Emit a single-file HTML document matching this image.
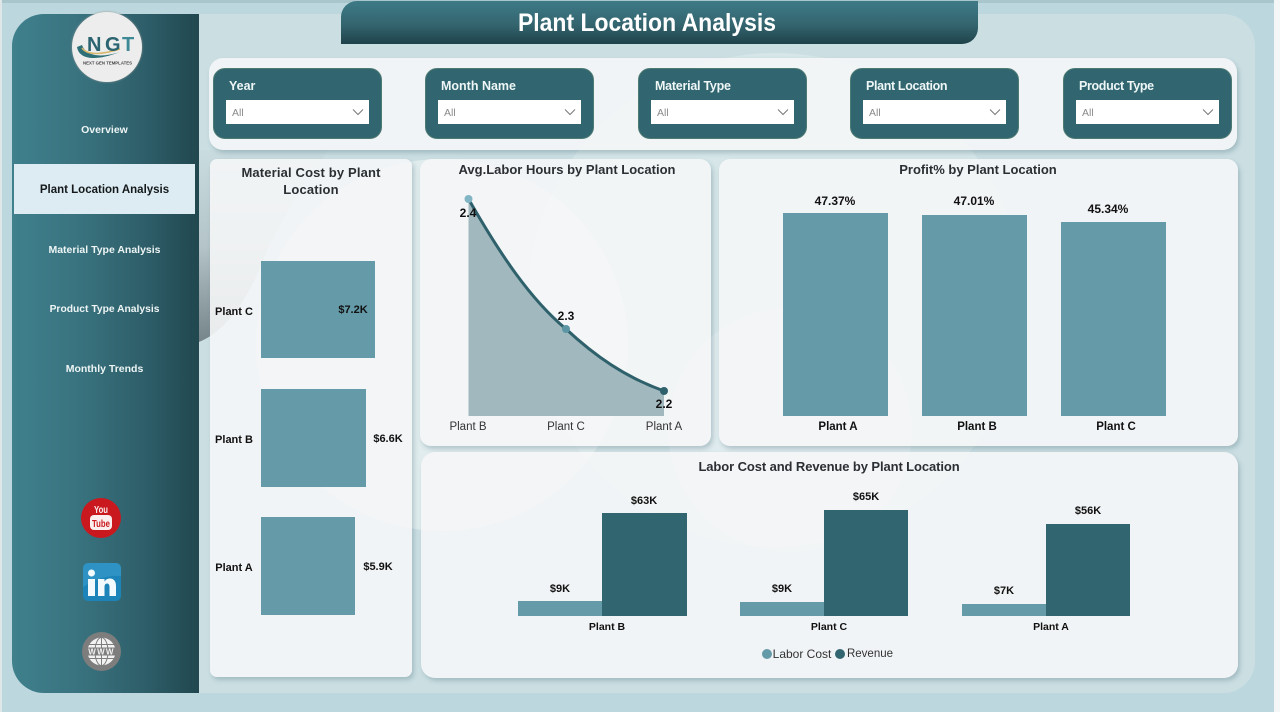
<!DOCTYPE html>
<html><head><meta charset="utf-8">
<style>
*{box-sizing:border-box;margin:0;padding:0}
html,body{width:1280px;height:712px;overflow:hidden;background:#bcd8de;font-family:"Liberation Sans",sans-serif}
.a{position:absolute}
#root{position:relative;width:1280px;height:712px;overflow:hidden;background:#bcd8de}
.t{position:absolute;white-space:nowrap;transform:translateX(-50%);font-weight:bold;color:#111}
.title{color:#2b2f33;font-size:13px}
.panel{position:absolute;background:rgba(245,246,247,.9);box-shadow:2px 3px 5px rgba(70,110,120,.3)}
.sl{position:absolute;top:68px;height:71px;width:169px;background:#316570;border-radius:12px;border:1px solid #4d7a72}
.sl b{position:absolute;left:15px;top:10px;color:#eef6f6;font-size:12.5px}
.sl div{position:absolute;left:12px;top:31px;width:143px;height:24px;background:#fff;color:#8a8a8a;font-size:10.5px;padding:7px 0 0 6px}
.sl svg{position:absolute;right:5px;top:8px}
.nav{position:absolute;left:12px;width:185px;text-align:center;color:#eef5f5;font-weight:bold;font-size:10.5px}
.b1{position:absolute;background:#659aa8}
.b2{position:absolute;background:#316570}
.l{font-size:11px}
.n{font-weight:normal;color:#333;font-size:11.5px}
</style></head><body><div id="root">
<div class="a" style="left:0;top:0;width:1280px;height:3px;background:#a9c6cc"></div>
<div class="a" style="left:0;top:0;width:2px;height:712px;background:#dfe6e8"></div>
<div class="a" style="left:1274px;top:0;width:6px;height:712px;background:#f4f6f7"></div>

<div class="a" style="left:12px;top:14px;width:1243px;height:679px;border-radius:32px;background:#cbdfe3"></div>
<svg class="a" style="left:0;top:0" width="1280" height="712" viewBox="0 0 1280 712">
<defs><linearGradient id="w" x1="0" y1="150" x2="0" y2="342" gradientUnits="userSpaceOnUse"><stop offset="0" stop-color="#c9dce0"/><stop offset=".5" stop-color="#b4c4c8"/><stop offset="1" stop-color="#76858a"/></linearGradient></defs>
<circle cx="775" cy="300" r="247" fill="#fff" fill-opacity=".22"/>
<circle cx="790" cy="430" r="122" fill="#fff" fill-opacity=".22"/>
<path d="M199 150 L328 150 Q292 200 268 248 Q240 325 199 342 Z" fill="url(#w)"/>
<circle cx="442" cy="345" r="186" fill="#fff" fill-opacity=".4"/>
</svg>

<!-- sidebar -->
<div class="a" style="left:12px;top:14px;width:187px;height:679px;border-radius:32px 0 0 32px;background:linear-gradient(90deg,#3f808d 0%,#39737f 35%,#2e5f6a 70%,#21474f 100%)"></div>

<!-- header -->
<div class="a" style="left:341px;top:1px;width:637px;height:43px;border-radius:16px 0 16px 0;background:linear-gradient(180deg,#3d7a86 0%,#34656f 55%,#1f4249 100%)"></div>
<div class="t" style="left:647px;top:9px;font-size:25px;color:#fff;transform:translateX(-50%) scaleX(.918)">Plant Location Analysis</div>

<!-- logo -->
<div class="a" style="left:72px;top:12px;width:70px;height:70px;border-radius:50%;background:#ecedec;box-shadow:0 0 2px #999"></div>
<svg class="a" style="left:72px;top:12px" width="70" height="70" viewBox="0 0 70 70">
<path d="M5 35 C7 47 22 50 48 40 C32 45 15 46 10 33 Z" fill="#2f6f78"/>
<path d="M10 36 C16 44 32 42 48 37" stroke="#d8b66a" stroke-width="1.5" fill="none"/>
<text x="15" y="39" font-family="Liberation Sans" font-weight="bold" font-size="20" fill="#2b6470">N</text>
<text x="33" y="39" font-family="Liberation Sans" font-weight="bold" font-size="20" fill="#2b6470">G</text>
<text x="50" y="39" font-family="Liberation Sans" font-weight="bold" font-size="20" fill="#3d8a96">T</text>
<text x="11" y="52.500" font-family="Liberation Sans" font-weight="bold" font-size="4.600" fill="#444" textLength="49" lengthAdjust="spacingAndGlyphs">NEXT GEN TEMPLATES</text>
</svg>

<!-- nav -->
<div class="nav" style="top:124px">Overview</div>
<div class="a" style="left:14px;top:164px;width:181px;height:50px;background:#dcecf2"></div>
<div class="nav" style="top:184px;left:14px;width:181px;color:#14181a;font-size:11.500px">Plant Location Analysis</div>
<div class="nav" style="top:244px">Material Type Analysis</div>
<div class="nav" style="top:304px;font-size:10.300px">Product Type Analysis</div>
<div class="nav" style="top:363px">Monthly Trends</div>

<!-- social -->
<svg class="a" style="left:81px;top:498px" width="40" height="40" viewBox="0 0 40 40">
<circle cx="20" cy="20" r="20" fill="#c9191f"/>
<text x="20" y="15" text-anchor="middle" font-family="Liberation Sans" font-weight="bold" font-size="10.500" fill="#fbeeee" textLength="14" lengthAdjust="spacingAndGlyphs">You</text>
<rect x="9" y="17" width="22" height="15" rx="4" fill="#fbeeee"/>
<text x="20" y="29" text-anchor="middle" font-family="Liberation Sans" font-weight="bold" font-size="10.500" fill="#c9191f" textLength="18" lengthAdjust="spacingAndGlyphs">Tube</text>
</svg>
<svg class="a" style="left:83px;top:563px" width="38" height="38" viewBox="0 0 38 38">
<rect width="38" height="38" rx="5" fill="#1c84b8"/>
<path d="M0 5a5 5 0 0 1 5-5h28a5 5 0 0 1 5 5v8C24 12 12 16 0 24Z" fill="#3a9ccb" opacity=".6"/>
<circle cx="8.500" cy="10" r="3.500" fill="#f2fafd"/>
<rect x="5" y="16" width="7" height="17" fill="#f2fafd"/>
<path d="M15 16h6.500v2.600c1.200-2 3-3.100 5.300-3.100 4.300 0 6.200 3 6.200 7.700V33h-6.500v-8.800c0-2.300-.7-3.700-2.400-3.700-1.800 0-2.600 1.400-2.600 3.700V33H15Z" fill="#f2fafd"/>
</svg>
<svg class="a" style="left:82px;top:632px" width="39" height="39" viewBox="0 0 39 39">
<circle cx="19.500" cy="19.500" r="19.500" fill="#7d7d7d"/>
<circle cx="19.500" cy="19.500" r="14" fill="#f2f2f2"/>
<g stroke="#7d7d7d" stroke-width="1" fill="none">
<ellipse cx="19.500" cy="19.500" rx="6.500" ry="14"/>
<path d="M19.500 5.500V33.500M6 12.500H33M6 26.500H33"/>
</g>
<rect x="4" y="15.500" width="31" height="8" fill="#7d7d7d"/>
<text x="19.500" y="22.500" text-anchor="middle" font-family="Liberation Sans" font-weight="bold" font-size="8" fill="#f2f2f2" letter-spacing="1.300">WWW</text>
</svg>

<!-- filter panel -->
<div class="panel" style="left:209px;top:58px;width:1028px;height:92px;border-radius:14px"></div>
<div class="sl" style="left:213px"><b>Year</b><div>All<svg width="12" height="8"><path d="M1 1.500l5 5 5-5" stroke="#777" fill="none"/></svg></div></div>
<div class="sl" style="left:425px"><b>Month Name</b><div>All<svg width="12" height="8"><path d="M1 1.500l5 5 5-5" stroke="#777" fill="none"/></svg></div></div>
<div class="sl" style="left:638px"><b style="left:16px;letter-spacing:-.25px">Material Type</b><div>All<svg width="12" height="8"><path d="M1 1.500l5 5 5-5" stroke="#777" fill="none"/></svg></div></div>
<div class="sl" style="left:850px"><b style="letter-spacing:-.35px">Plant Location</b><div>All<svg width="12" height="8"><path d="M1 1.500l5 5 5-5" stroke="#777" fill="none"/></svg></div></div>
<div class="sl" style="left:1063px"><b style="letter-spacing:-.35px">Product Type</b><div>All<svg width="12" height="8"><path d="M1 1.500l5 5 5-5" stroke="#777" fill="none"/></svg></div></div>

<!-- Material cost -->
<div class="panel" style="left:210px;top:159px;width:202px;height:518px;border-radius:7px"></div>
<div class="t title" style="left:311px;top:164px;text-align:center;line-height:17px;letter-spacing:.15px">Material Cost by Plant<br>Location</div>
<div class="b1" style="left:261px;top:261px;width:114px;height:97px"></div>
<div class="b1" style="left:261px;top:389px;width:105px;height:98px"></div>
<div class="b1" style="left:261px;top:517px;width:94px;height:98px"></div>
<div class="t l" style="left:234px;top:306px">Plant C</div>
<div class="t l" style="left:234px;top:434px">Plant B</div>
<div class="t l" style="left:234px;top:562px">Plant A</div>
<div class="t l" style="left:353px;top:304px">$7.2K</div>
<div class="t l" style="left:388px;top:433px">$6.6K</div>
<div class="t l" style="left:378px;top:561px">$5.9K</div>

<!-- Avg labor -->
<div class="panel" style="left:420px;top:159px;width:291px;height:287px;border-radius:11px"></div>
<div class="t title" style="left:567px;top:162px">Avg.Labor Hours by Plant Location</div>
<svg class="a" style="left:420px;top:159px" width="291" height="287" viewBox="0 0 291 287">
<path d="M48.500 40 C80 95 110 140 146 170 C175 197 205 218 244 232 V257 H48.500Z" fill="#a1b9be"/>
<path d="M48.500 40 C80 95 110 140 146 170 C175 197 205 218 244 232" fill="none" stroke="#2e616b" stroke-width="3"/>
<circle cx="48.500" cy="40" r="4" fill="#82b5c4"/><circle cx="146" cy="170" r="4" fill="#5c95a3"/><circle cx="244" cy="232" r="4" fill="#2e616b"/>
</svg>
<div class="t" style="left:468px;top:206px;font-size:12px">2.4</div>
<div class="t" style="left:566px;top:309px;font-size:12px">2.3</div>
<div class="t" style="left:664px;top:397px;font-size:12px">2.2</div>
<div class="t n" style="left:468px;top:421px">Plant B</div>
<div class="t n" style="left:566px;top:421px">Plant C</div>
<div class="t n" style="left:664px;top:421px">Plant A</div>

<!-- Profit -->
<div class="panel" style="left:719px;top:159px;width:519px;height:287px;border-radius:11px"></div>
<div class="t title" style="left:978px;top:162px">Profit% by Plant Location</div>
<div class="b1" style="left:783px;top:213px;width:105px;height:203px"></div>
<div class="b1" style="left:922px;top:215px;width:105px;height:201px"></div>
<div class="b1" style="left:1061px;top:222px;width:105px;height:194px"></div>
<div class="t" style="left:835px;top:194px;font-size:12px">47.37%</div>
<div class="t" style="left:974px;top:194px;font-size:12px">47.01%</div>
<div class="t" style="left:1108px;top:202px;font-size:12px">45.34%</div>
<div class="t" style="left:838px;top:421px;font-size:11.500px">Plant A</div>
<div class="t" style="left:977px;top:421px;font-size:11.500px">Plant B</div>
<div class="t" style="left:1116px;top:421px;font-size:11.500px">Plant C</div>

<!-- Labor/Revenue -->
<div class="panel" style="left:421px;top:452px;width:817px;height:226px;border-radius:14px"></div>
<div class="t title" style="left:829px;top:459px;letter-spacing:-.1px">Labor Cost and Revenue by Plant Location</div>
<div class="b1" style="left:518px;top:601px;width:84px;height:15px"></div>
<div class="b2" style="left:602px;top:513px;width:85px;height:103px"></div>
<div class="b1" style="left:740px;top:602px;width:84px;height:14px"></div>
<div class="b2" style="left:824px;top:510px;width:84px;height:106px"></div>
<div class="b1" style="left:962px;top:604px;width:84px;height:12px"></div>
<div class="b2" style="left:1046px;top:524px;width:84px;height:92px"></div>
<div class="t l" style="left:560px;top:583px">$9K</div>
<div class="t l" style="left:644px;top:495px">$63K</div>
<div class="t l" style="left:782px;top:583px">$9K</div>
<div class="t l" style="left:866px;top:491px">$65K</div>
<div class="t l" style="left:1004px;top:585px">$7K</div>
<div class="t l" style="left:1088px;top:505px">$56K</div>
<div class="t l" style="left:607px;top:621px;font-size:10.500px">Plant B</div>
<div class="t l" style="left:829px;top:621px;font-size:10.500px">Plant C</div>
<div class="t l" style="left:1051px;top:621px;font-size:10.500px">Plant A</div>
<div class="a" style="left:762px;top:649px;width:10px;height:10px;border-radius:50%;background:#659aa8"></div>
<div class="a" style="left:835px;top:649px;width:10px;height:10px;border-radius:50%;background:#316570"></div>
<div class="t" style="left:802px;top:647px;font-weight:normal;font-size:12px;color:#333">Labor Cost</div>
<div class="t" style="left:870px;top:648px;font-weight:normal;font-size:11.500px;color:#333">Revenue</div>
</div></body></html>
